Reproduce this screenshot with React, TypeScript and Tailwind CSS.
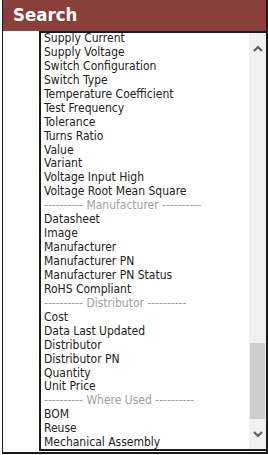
import React from "react";

const fields: { label: string; sep?: boolean }[] = [
  { label: "Supply Current" },
  { label: "Supply Voltage" },
  { label: "Switch Configuration" },
  { label: "Switch Type" },
  { label: "Temperature Coefficient" },
  { label: "Test Frequency" },
  { label: "Tolerance" },
  { label: "Turns Ratio" },
  { label: "Value" },
  { label: "Variant" },
  { label: "Voltage Input High" },
  { label: "Voltage Root Mean Square" },
  { label: "---------- Manufacturer ----------", sep: true },
  { label: "Datasheet" },
  { label: "Image" },
  { label: "Manufacturer" },
  { label: "Manufacturer PN" },
  { label: "Manufacturer PN Status" },
  { label: "RoHS Compliant" },
  { label: "---------- Distributor ----------", sep: true },
  { label: "Cost" },
  { label: "Data Last Updated" },
  { label: "Distributor" },
  { label: "Distributor PN" },
  { label: "Quantity" },
  { label: "Unit Price" },
  { label: "---------- Where Used ----------", sep: true },
  { label: "BOM" },
  { label: "Reuse" },
  { label: "Mechanical Assembly" },
];

export default function App() {
  return (
    <main className="h-[455px] w-[268px] bg-white pl-[2px] font-['DejaVu_Sans_Condensed','DejaVu_Sans',sans-serif]">
      <div className="flex h-[454px] w-[266px] flex-col border-b-2 border-l border-r-2 border-[#1a1a1a]">
        <div className="flex h-[31px] shrink-0 items-center bg-[#8a3f3a] pl-[10px]">
          <h1 className="text-[18.5px] font-bold leading-none text-white">Search</h1>
        </div>

        <div className="flex min-h-0 flex-1 pb-[1px] pl-[36px]">
          <div className="flex min-h-0 flex-1 overflow-hidden border-b-2 border-l-2 border-t-2 border-[#1a1a1a]">
            <ul className="-mt-[1px] min-w-0 flex-1 overflow-hidden pl-[3px] text-[12px] leading-[13.93px] text-[#222]">
              {fields.map((f) => (
                <li
                  key={f.label}
                  className={f.sep ? "whitespace-nowrap text-[#a0a0a0]" : "whitespace-nowrap"}
                >
                  {f.label}
                </li>
              ))}
            </ul>

            {/* fake scrollbar */}
            <div className="flex w-[17px] shrink-0 flex-col bg-[#f0f0f0]">
              <div className="flex h-[30px] items-center justify-center">
                <svg width="10" height="7" viewBox="0 0 10 7">
                  <path d="M1 6 L5 2 L9 6" fill="none" stroke="#606060" strokeWidth="2.2" />
                </svg>
              </div>
              <div className="flex flex-1 flex-col justify-end px-[1px]">
                <div className="h-[76px] bg-[#cdcdcd]" />
              </div>
              <div className="flex h-[30px] items-center justify-center">
                <svg width="10" height="7" viewBox="0 0 10 7">
                  <path d="M1 1 L5 5 L9 1" fill="none" stroke="#606060" strokeWidth="2.2" />
                </svg>
              </div>
            </div>
          </div>
        </div>
      </div>
    </main>
  );
}
